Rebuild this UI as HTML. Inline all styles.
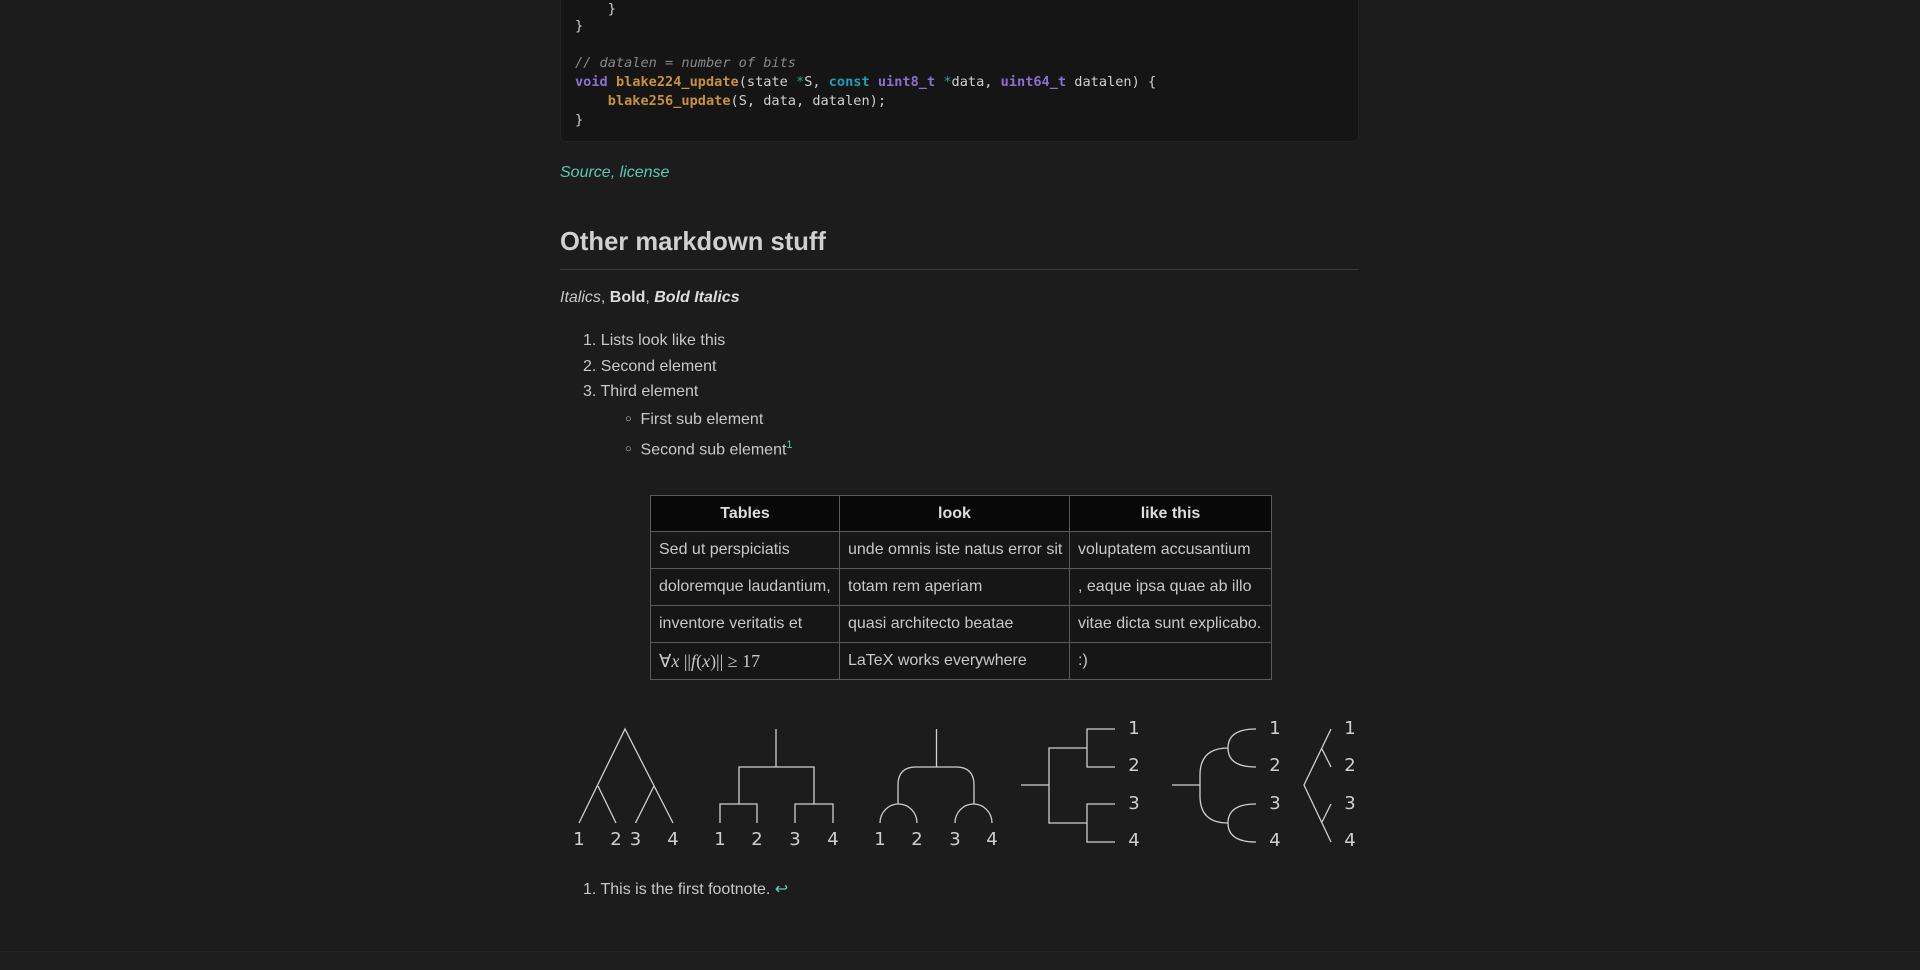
<!DOCTYPE html>
<html><head><meta charset="utf-8"><style>
html,body{margin:0;padding:0;background:#1c1c1c;width:1920px;height:970px;overflow:hidden;position:relative;font-family:"Liberation Sans",sans-serif;color:#c8c8c8;font-size:16px}
.a{position:absolute;white-space:nowrap}
.code{position:absolute;left:560px;top:-20px;width:799px;height:162px;background:#151515;border:1px solid #222;border-radius:6px;box-sizing:border-box}
.cl{position:absolute;left:575px;font-family:"DejaVu Sans Mono","Liberation Mono",monospace;font-size:13.6px;color:#d0d0d0;white-space:pre;line-height:19px}
.k{color:#8a6fd0;font-weight:bold}.f{color:#c8913a;font-weight:bold}.c{color:#888;font-style:italic}.t{color:#1a9fb5;font-weight:bold}.s{color:#2aa198}
.link{color:#5bc8b4}
table{position:absolute;left:650px;top:495px;border-collapse:collapse;font-size:16px;color:#c8c8c8;table-layout:fixed;width:621px}
td,th{border:1px solid #5a5a5a;padding:0 8px;height:36px;text-align:left;white-space:nowrap;overflow:hidden}
th{background:#080808;text-align:center;font-weight:bold;color:#ddd;height:35px}
td{background:#161616}
</style></head><body>
<div class="code"></div>
<div class="cl" style="top:0px">    }</div>
<div class="cl" style="top:17px">}</div>
<div class="cl" style="top:54px"><span class="c">// datalen = number of bits</span></div>
<div class="cl" style="top:73px"><span class="k">void</span> <span class="f">blake224_update</span>(state <span class="s">*</span>S, <span class="t">const</span> <span class="k">uint8_t</span> <span class="s">*</span>data, <span class="k">uint64_t</span> datalen) {</div>
<div class="cl" style="top:92px">    <span class="f">blake256_update</span>(S, data, datalen);</div>
<div class="cl" style="top:111px">}</div>

<div class="a link" style="left:560px;top:164px;font-style:italic">Source, license</div>
<div class="a" style="left:560px;top:228px;font-size:25.6px;font-weight:bold;color:#d0d0d0">Other markdown stuff</div>
<div class="a" style="left:560px;top:269px;width:799px;height:1px;background:#3a3a3a"></div>
<div class="a" style="left:560px;top:289px"><i>Italics</i>, <b style="color:#ddd">Bold</b>, <b style="color:#ddd"><i>Bold Italics</i></b></div>

<div class="a" style="left:583px;top:332px">1. Lists look like this</div>
<div class="a" style="left:583px;top:358px">2. Second element</div>
<div class="a" style="left:583px;top:383px">3. Third element</div>
<div class="a" style="left:625px;top:411px"><span style="font-size:11px;position:relative;top:-2px">○</span>&nbsp; First sub element</div>
<div class="a" style="left:625px;top:439px"><span style="font-size:11px;position:relative;top:-2px">○</span>&nbsp; Second sub element<sup class="link" style="font-size:11px">1</sup></div>

<table>
<colgroup><col style="width:189px"><col style="width:230px"><col style="width:202px"></colgroup>
<tr><th>Tables</th><th>look</th><th>like this</th></tr>
<tr><td>Sed ut perspiciatis</td><td>unde omnis iste natus error sit</td><td>voluptatem accusantium</td></tr>
<tr><td>doloremque laudantium,</td><td>totam rem aperiam</td><td>, eaque ipsa quae ab illo</td></tr>
<tr><td>inventore veritatis et</td><td>quasi architecto beatae</td><td>vitae dicta sunt explicabo.</td></tr>
<tr><td style="font-family:'Liberation Serif',serif;font-size:18px">∀<i>x</i> ||<i>f</i>(<i>x</i>)|| ≥ 17</td><td>LaTeX works everywhere</td><td>:)</td></tr>
</table>

<svg class="a" style="left:0;top:0" width="1920" height="970" fill="none" stroke="#cfcfcf" stroke-width="1.3">
<path d="M579 823L625 729L673 823M598 786L616 823M654 786L635.5 823"/>
<path d="M776 729V767M739 804V767H814V804M720 823V804H757V823M795 823V804H833V823"/>
<path d="M936.5 729V767M898 804V785Q898 767 916 767H956Q974 767 974 785V804M880 823A18.5 19 0 0 1 917 823M955 823A18.5 19 0 0 1 992 823"/>
<path d="M1021 785H1049M1087 748H1049V823H1087M1115 729H1087V767H1115M1115 804H1087V842H1115"/>
<path d="M1172 785H1200M1228 748Q1200 748 1200 775V796Q1200 823 1228 823M1256 729Q1228 729 1228 748Q1228 767 1256 767M1256 804Q1228 804 1228 823Q1228 842 1256 842"/>
<path d="M1331 729L1304 785L1331 842M1322 749L1331 767M1322 822L1331 804"/>
<g fill="#cfcfcf" stroke="none" font-family="DejaVu Sans, sans-serif" font-size="18" text-anchor="middle">
<text x="579" y="845">1</text><text x="616" y="845">2</text><text x="635.5" y="845">3</text><text x="673" y="845">4</text>
<text x="720" y="845">1</text><text x="757" y="845">2</text><text x="795" y="845">3</text><text x="833" y="845">4</text>
<text x="880" y="845">1</text><text x="917" y="845">2</text><text x="955" y="845">3</text><text x="992" y="845">4</text>
<text x="1134" y="734">1</text><text x="1134" y="771">2</text><text x="1134" y="809">3</text><text x="1134" y="846">4</text>
<text x="1275" y="734">1</text><text x="1275" y="771">2</text><text x="1275" y="809">3</text><text x="1275" y="846">4</text>
<text x="1350" y="734">1</text><text x="1350" y="771">2</text><text x="1350" y="809">3</text><text x="1350" y="846">4</text>
</g>
</svg>

<div class="a" style="left:583px;top:879px">1. This is the first footnote. <span class="link">↩</span></div>
<div class="a" style="left:0;top:951px;width:1920px;height:19px;background:#1e1e1e;border-top:1px solid #242424"></div>
</body></html>
